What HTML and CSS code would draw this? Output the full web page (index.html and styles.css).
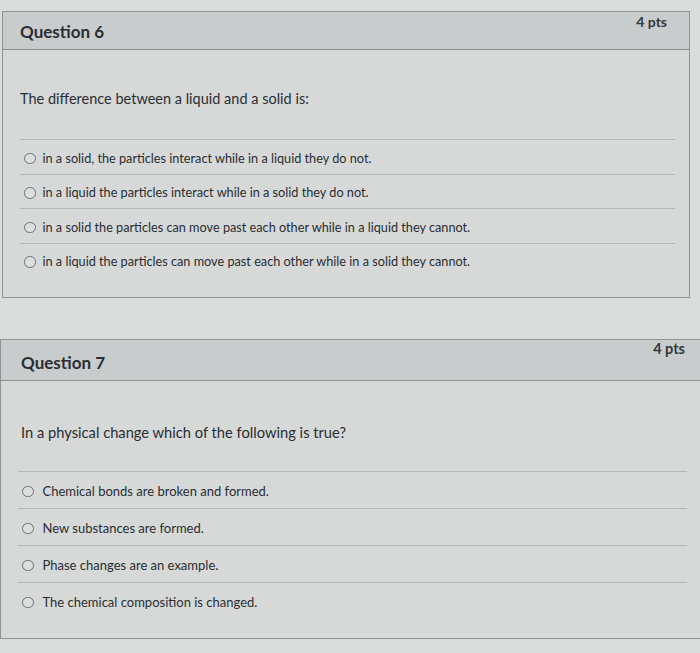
FILE: index.html
```html
<!DOCTYPE html>
<html lang="en">
<head>
<meta charset="utf-8">
<title>Quiz</title>
<link rel="stylesheet" href="styles.css">
</head>
<body>
<div class="page">
  <section class="question q6">
    <header class="q-header">
      <h2 class="q-title">Question 6</h2>
      <span class="q-pts">4 pts</span>
    </header>
    <div class="q-body">
      <p class="q-text">The difference between a liquid and a solid is:</p>
      <ul class="answers">
        <li class="answer"><span class="radio"></span><span class="a-text">in a solid, the particles interact while in a liquid they do not.</span></li>
        <li class="answer"><span class="radio"></span><span class="a-text">in a liquid the particles interact while in a solid they do not.</span></li>
        <li class="answer"><span class="radio"></span><span class="a-text">in a solid the particles can move past each other while in a liquid they cannot.</span></li>
        <li class="answer"><span class="radio"></span><span class="a-text">in a liquid the particles can move past each other while in a solid they cannot.</span></li>
      </ul>
    </div>
  </section>

  <section class="question q7">
    <header class="q-header">
      <h2 class="q-title">Question 7</h2>
      <span class="q-pts">4 pts</span>
    </header>
    <div class="q-body">
      <p class="q-text">In a physical change which of the following is true?</p>
      <ul class="answers">
        <li class="answer"><span class="radio"></span><span class="a-text">Chemical bonds are broken and formed.</span></li>
        <li class="answer"><span class="radio"></span><span class="a-text">New substances are formed.</span></li>
        <li class="answer"><span class="radio"></span><span class="a-text">Phase changes are an example.</span></li>
        <li class="answer"><span class="radio"></span><span class="a-text">The chemical composition is changed.</span></li>
      </ul>
    </div>
  </section>
</div>
</body>
</html>
```

FILE: styles.css
```css
html, body {
  margin: 0;
  padding: 0;
}
body {
  background: #dadddc;
  font-family: Lato, "Open Sans", sans-serif;
  color: #2a2e32;
  width: 700px;
  height: 653px;
  overflow: hidden;
}
.page {
  display: flex;
  flex-direction: column;
  padding-top: 11px;
}
.question {
  border: 1px solid #8e9393;
  background: #d6d9d8;
}
.q6 {
  margin-left: 2px;
  width: 686px;
}
.q7 {
  margin-top: 41px;
  width: 720px;
  border-right: none;
}
.q-header {
  display: flex;
  justify-content: space-between;
  align-items: flex-start;
  background: #c9cccc;
  border-bottom: 1px solid #8a8f8f;
  padding: 0 22px 0 17px;
}
.q6 .q-header { height: 37px; }
.q7 .q-header { height: 40px; padding-left: 20px; padding-right: 36px; }
.q-title {
  margin: 0;
  font-size: 17px;
  font-weight: 700;
  line-height: 20px;
  padding-top: 10px;
}
.q7 .q-title { padding-top: 13px; }
.q-pts {
  font-size: 14px;
  font-weight: 700;
  line-height: 18px;
  padding-top: 1px;
  color: #33373b;
}
.q7 .q-pts { font-size: 14.5px; padding-top: 0; }
.q-body {
  padding: 0 14px 20px 17px;
}
.q7 .q-body { padding: 0 34px 19px 17px; }
.q-text {
  margin: 0;
  font-size: 14.5px;
  line-height: 20px;
}
.q6 .q-text { padding-top: 39px; padding-bottom: 30px; }
.q7 .q-text {
  padding-top: 41px;
  padding-bottom: 29px;
  padding-left: 3px;
  font-size: 14.7px;
}
.answers {
  list-style: none;
  margin: 0;
  padding: 0;
}
.answer {
  display: flex;
  align-items: center;
  border-top: 1px solid #b4b8b8;
  padding-left: 4px;
}
.q6 .answer {
  height: 33.5px;
  font-size: 12.7px;
  gap: 7px;
}
.q7 .answer {
  height: 36px;
  font-size: 13px;
  gap: 9px;
}
.radio {
  flex: none;
  width: 9.5px;
  height: 9.5px;
  border: 1.25px solid #6c7176;
  border-radius: 50%;
  background: #dcdfde;
  margin-top: 3px;
}
.a-text {
  line-height: 16px;
  padding-top: 2px;
}
```
